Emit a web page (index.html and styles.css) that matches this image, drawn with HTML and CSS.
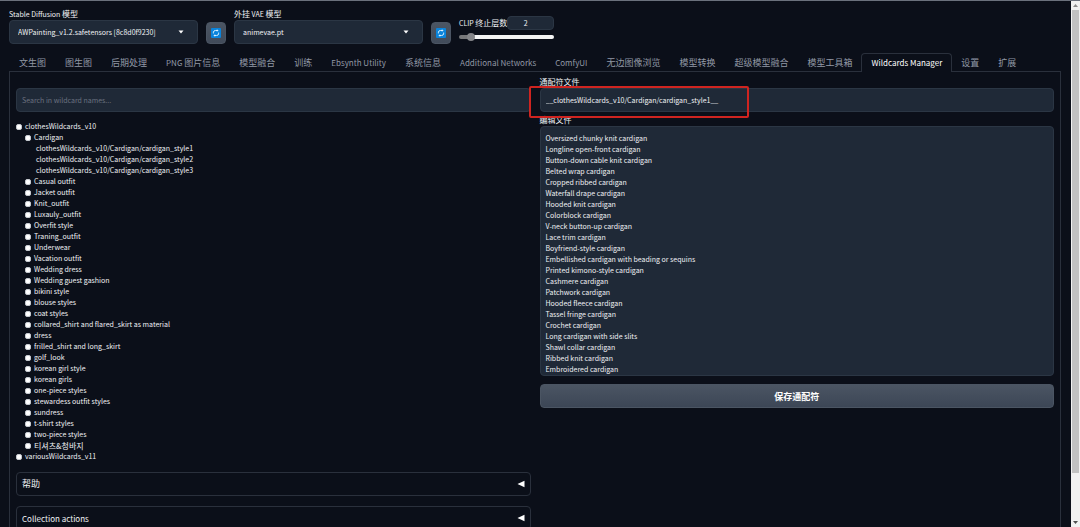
FILE: index.html
```html
<!DOCTYPE html>
<html lang="zh-CN">
<head>
<meta charset="utf-8">
<title>Stable Diffusion</title>
<link rel="stylesheet" href="styles.css">
</head>
<body>
<div class="app">
  <header class="quick">
    <div class="field">
      <label for="model">Stable Diffusion <span class="zh">模型</span></label>
      <div class="pick"><select id="model"><option>AWPainting_v1.2.safetensors [8c8d0f9230]</option></select><svg class="caret" viewBox="0 0 6 4"><path d="M0.5 0.5h5L3 3.5z"/></svg></div>
    </div>
    <button class="refresh" type="button" aria-label="刷新模型"><svg viewBox="0 0 10 10"><rect width="10" height="10" rx="1" fill="#0a84dc"/><path d="M2.4 5.4V4.2a2 2 0 0 1 2-1.7h1.8M7.6 4.6v1.2a2 2 0 0 1-2 1.7H3.8" fill="none" stroke="#d9f1ff" stroke-width="1"/><path d="M5.8 1.3 7.6 2.5 5.8 3.7zM4.2 6.3 2.4 7.5 4.2 8.7z" fill="#d9f1ff"/></svg></button>
    <div class="field">
      <label for="vae"><span class="zh">外挂</span> VAE <span class="zh">模型</span></label>
      <div class="pick"><select id="vae"><option>animevae.pt</option></select><svg class="caret" viewBox="0 0 6 4"><path d="M0.5 0.5h5L3 3.5z"/></svg></div>
    </div>
    <button class="refresh" type="button" aria-label="刷新 VAE"><svg viewBox="0 0 10 10"><rect width="10" height="10" rx="1" fill="#0a84dc"/><path d="M2.4 5.4V4.2a2 2 0 0 1 2-1.7h1.8M7.6 4.6v1.2a2 2 0 0 1-2 1.7H3.8" fill="none" stroke="#d9f1ff" stroke-width="1"/><path d="M5.8 1.3 7.6 2.5 5.8 3.7zM4.2 6.3 2.4 7.5 4.2 8.7z" fill="#d9f1ff"/></svg></button>
    <div class="clip">
      <div class="clip-head"><label for="clip">CLIP <span class="zh">终止层数</span></label><input class="number" type="text" value="2" aria-label="CLIP 终止层数"></div>
      <input class="slider" id="clip" type="range" min="1" max="12" value="2">
    </div>
  </header>

  <nav class="tabs">
    <button type="button"><span class="zh">文生图</span></button>
    <button type="button"><span class="zh">图生图</span></button>
    <button type="button"><span class="zh">后期处理</span></button>
    <button type="button">PNG <span class="zh">图片信息</span></button>
    <button type="button"><span class="zh">模型融合</span></button>
    <button type="button"><span class="zh">训练</span></button>
    <button type="button">Ebsynth Utility</button>
    <button type="button"><span class="zh">系统信息</span></button>
    <button type="button">Additional Networks</button>
    <button type="button">ComfyUI</button>
    <button type="button"><span class="zh">无边图像浏览</span></button>
    <button type="button"><span class="zh">模型转换</span></button>
    <button type="button"><span class="zh">超级模型融合</span></button>
    <button type="button"><span class="zh">模型工具箱</span></button>
    <button type="button" class="active">Wildcards Manager</button>
    <button type="button"><span class="zh">设置</span></button>
    <button type="button"><span class="zh">扩展</span></button>
  </nav>

  <main class="panel">
    <section class="browse">
      <input class="box" type="text" placeholder="Search in wildcard names..." aria-label="Search in wildcard names">
      <ul class="tree">
        <li><label><input type="checkbox">clothesWildcards_v10</label>
          <ul>
            <li><label><input type="checkbox">Cardigan</label>
              <ul class="leaves">
                <li>clothesWildcards_v10/Cardigan/cardigan_style1</li>
                <li>clothesWildcards_v10/Cardigan/cardigan_style2</li>
                <li>clothesWildcards_v10/Cardigan/cardigan_style3</li>
              </ul>
            </li>
            <li><label><input type="checkbox">Casual outfit</label></li>
            <li><label><input type="checkbox">Jacket outfit</label></li>
            <li><label><input type="checkbox">Knit_outfit</label></li>
            <li><label><input type="checkbox">Luxauly_outfit</label></li>
            <li><label><input type="checkbox">Overfit style</label></li>
            <li><label><input type="checkbox">Traning_outfit</label></li>
            <li><label><input type="checkbox">Underwear</label></li>
            <li><label><input type="checkbox">Vacation outfit</label></li>
            <li><label><input type="checkbox">Wedding dress</label></li>
            <li><label><input type="checkbox">Wedding guest gashion</label></li>
            <li><label><input type="checkbox">bikini style</label></li>
            <li><label><input type="checkbox">blouse styles</label></li>
            <li><label><input type="checkbox">coat styles</label></li>
            <li><label><input type="checkbox">collared_shirt and flared_skirt as material</label></li>
            <li><label><input type="checkbox">dress</label></li>
            <li><label><input type="checkbox">frilled_shirt and long_skirt</label></li>
            <li><label><input type="checkbox">golf_look</label></li>
            <li><label><input type="checkbox">korean girl style</label></li>
            <li><label><input type="checkbox">korean girls</label></li>
            <li><label><input type="checkbox">one-piece styles</label></li>
            <li><label><input type="checkbox">stewardess outfit styles</label></li>
            <li><label><input type="checkbox">sundress</label></li>
            <li><label><input type="checkbox">t-shirt styles</label></li>
            <li><label><input type="checkbox">two-piece styles</label></li>
            <li><label lang="ko"><input type="checkbox"><span class="ko">티셔츠&amp;청바지</span></label></li>
          </ul>
        </li>
        <li><label><input type="checkbox">variousWildcards_v11</label></li>
      </ul>
      <button class="accordion" type="button"><span class="zh">帮助</span><svg viewBox="0 0 8 8"><path d="M7.5 0.8v6.4L0.5 4z"/></svg></button>
      <button class="accordion" type="button"><span>Collection actions</span><svg viewBox="0 0 8 8"><path d="M7.5 0.8v6.4L0.5 4z"/></svg></button>
    </section>

    <section class="edit">
      <div class="marked">
        <label for="file"><span class="zh">通配符文件</span></label>
        <input class="box" id="file" type="text" value="__clothesWildcards_v10/Cardigan/cardigan_style1__">
        <div class="highlight"></div>
      </div>
      <label for="content"><span class="zh">编辑文件</span></label>
      <textarea class="box" id="content" rows="22">Oversized chunky knit cardigan
Longline open-front cardigan
Button-down cable knit cardigan
Belted wrap cardigan
Cropped ribbed cardigan
Waterfall drape cardigan
Hooded knit cardigan
Colorblock cardigan
V-neck button-up cardigan
Lace trim cardigan
Boyfriend-style cardigan
Embellished cardigan with beading or sequins
Printed kimono-style cardigan
Cashmere cardigan
Patchwork cardigan
Hooded fleece cardigan
Tassel fringe cardigan
Crochet cardigan
Long cardigan with side slits
Shawl collar cardigan
Ribbed knit cardigan
Embroidered cardigan</textarea>
      <button class="save" type="button">保存通配符</button>
    </section>
  </main>
</div>
<div class="scrollbar">
  <svg viewBox="0 0 9 9"><path d="M2 6h5L4.5 3z" fill="#8b8b8b"/></svg>
  <div class="thumb"></div>
  <svg viewBox="0 0 9 9"><path d="M2 3h5L4.5 6z" fill="#505050"/></svg>
</div>
</body>
</html>
```

FILE: styles.css
```css
* {
  box-sizing: border-box;
}

body {
  margin: 0;
  height: 100vh;
  display: flex;
  overflow: hidden;
  border-top: 1px solid #6b717c;
  background: #0b0f19;
  color: #f0f2f5;
  font: 7px/11px "Noto Sans CJK SC", "Noto Sans CJK KR", sans-serif;
}

button,
input,
select,
textarea {
  margin: 0;
  font: inherit;
  color: inherit;
}

label {
  display: block;
}

/* Han and Hangul text runs one size above the Latin text beside it */

.zh,
.ko {
  font-size: 8px;
  line-height: 10px;
}

.ko {
  line-height: 11px;
}

.tabs .zh,
.accordion .zh {
  font-size: 9px;
}

.app {
  flex: 1;
  min-width: 0;
  padding: 8px 10px 0 9px;
}

/* Quick settings */

.quick {
  display: flex;
  align-items: flex-end;
  gap: 8px;
}

.field {
  flex: 0 1 189px;
}

.pick {
  display: flex;
  align-items: center;
  position: relative;
}

.pick select {
  appearance: none;
  width: 100%;
  height: 24px;
  padding: 0 8px;
  border: 1px solid #2b3644;
  border-radius: 4px;
  background: #1f2937;
}

.caret {
  position: absolute;
  right: 14px;
  width: 6px;
  height: 4px;
  fill: #ffffff;
  pointer-events: none;
}

.refresh {
  display: flex;
  align-items: center;
  justify-content: center;
  width: 20px;
  height: 22px;
  padding: 0;
  border: 1px solid #4b5563;
  border-radius: 4px;
  background: linear-gradient(#4b5563, #414b5a);
}

.refresh svg {
  width: 10px;
  height: 10px;
}

.clip {
  width: 95px;
  padding-bottom: 2px;
}

.clip-head {
  display: flex;
  align-items: center;
  white-space: nowrap;
}

.clip-head label {
  flex: 0 0 48px;
}

.number {
  flex: 1;
  min-width: 0;
  height: 14px;
  padding: 0 10px 0 0;
  border: 1px solid #2b3644;
  border-radius: 4px;
  background: #1f2937;
  text-align: center;
}

.slider {
  appearance: none;
  display: block;
  width: 100%;
  height: 10px;
  margin-top: 2px;
  background: none;
}

.slider::-webkit-slider-runnable-track {
  height: 4px;
  border-radius: 2px;
  background: linear-gradient(90deg, #77787a 12%, #f5f5f5 12%);
}

.slider::-webkit-slider-thumb {
  appearance: none;
  width: 8px;
  height: 8px;
  margin-top: -2px;
  border-radius: 50%;
  background: #85868a;
}

/* Tabs */

.tabs {
  display: flex;
  margin-top: 9px;
  border-bottom: 1px solid #2a303c;
  white-space: nowrap;
}

.tabs button {
  height: 19px;
  margin: 0 -1px -1px 0;
  padding: 0 9px 2px;
  border: 1px solid transparent;
  border-bottom: 0;
  border-radius: 4px 4px 0 0;
  background: none;
  color: #9198a5;
  font-size: 8px;
}

.tabs .active {
  border-color: #2a303c;
  background: #0b0f19;
  color: #ffffff;
}

.panel {
  display: grid;
  grid-template-columns: 1fr 1fr;
  gap: 9px;
  padding: 5px 6px 12px;
  border: 1px solid #2a303c;
  border-top: 0;
}

.box {
  display: block;
  width: 100%;
  height: 24px;
  padding: 0 5px;
  border: 1px solid #2b3644;
  border-radius: 4px;
  background: #1f2937;
}

.box::placeholder {
  color: #6b7280;
}

/* Wildcard tree */

.browse {
  padding-top: 11px;
}

.tree {
  padding: 0;
  margin: 9px 0 10px;
  list-style: none;
}

.tree ul {
  padding-left: 9px;
  list-style: none;
}

.tree .leaves {
  padding-left: 11px;
}

.tree label {
  display: flex;
  align-items: center;
  gap: 3px;
}

.tree input {
  appearance: none;
  width: 6px;
  height: 6px;
  border: 1px solid #c4c8ce;
  border-radius: 2px;
  background: #ffffff;
}

.accordion {
  display: flex;
  align-items: center;
  justify-content: space-between;
  width: 100%;
  height: 24px;
  margin-bottom: 10px;
  padding: 0 5px;
  border: 1px solid #2a303c;
  border-radius: 4px;
  background: none;
  font-size: 8px;
}

.accordion svg {
  width: 8px;
  height: 8px;
  fill: #ffffff;
}

/* Editor */

.marked {
  position: relative;
  margin-bottom: 3px;
}

.highlight {
  position: absolute;
  left: -11px;
  top: 9px;
  width: 220px;
  height: 32px;
  border: 2px solid #cf2420;
  border-radius: 2px;
  pointer-events: none;
}

textarea.box {
  height: auto;
  padding: 6px 5px 0;
  resize: none;
  overflow: hidden;
}

.save {
  width: 100%;
  height: 24px;
  margin-top: 8px;
  border: 1px solid #4b5563;
  border-radius: 4px;
  background: linear-gradient(#4b5563, #3c4656);
  color: #ffffff;
  font-size: 9px;
  font-weight: 700;
}

/* Page scrollbar */

.scrollbar {
  display: flex;
  flex-direction: column;
  width: 9px;
  background: #f1f1f1;
}

.scrollbar svg {
  width: 9px;
  height: 9px;
}

.thumb {
  flex: 0 0 88%;
  margin: 0 1px;
  background: #c1c1c1;
}

.scrollbar svg:last-child {
  margin-top: auto;
}
```
